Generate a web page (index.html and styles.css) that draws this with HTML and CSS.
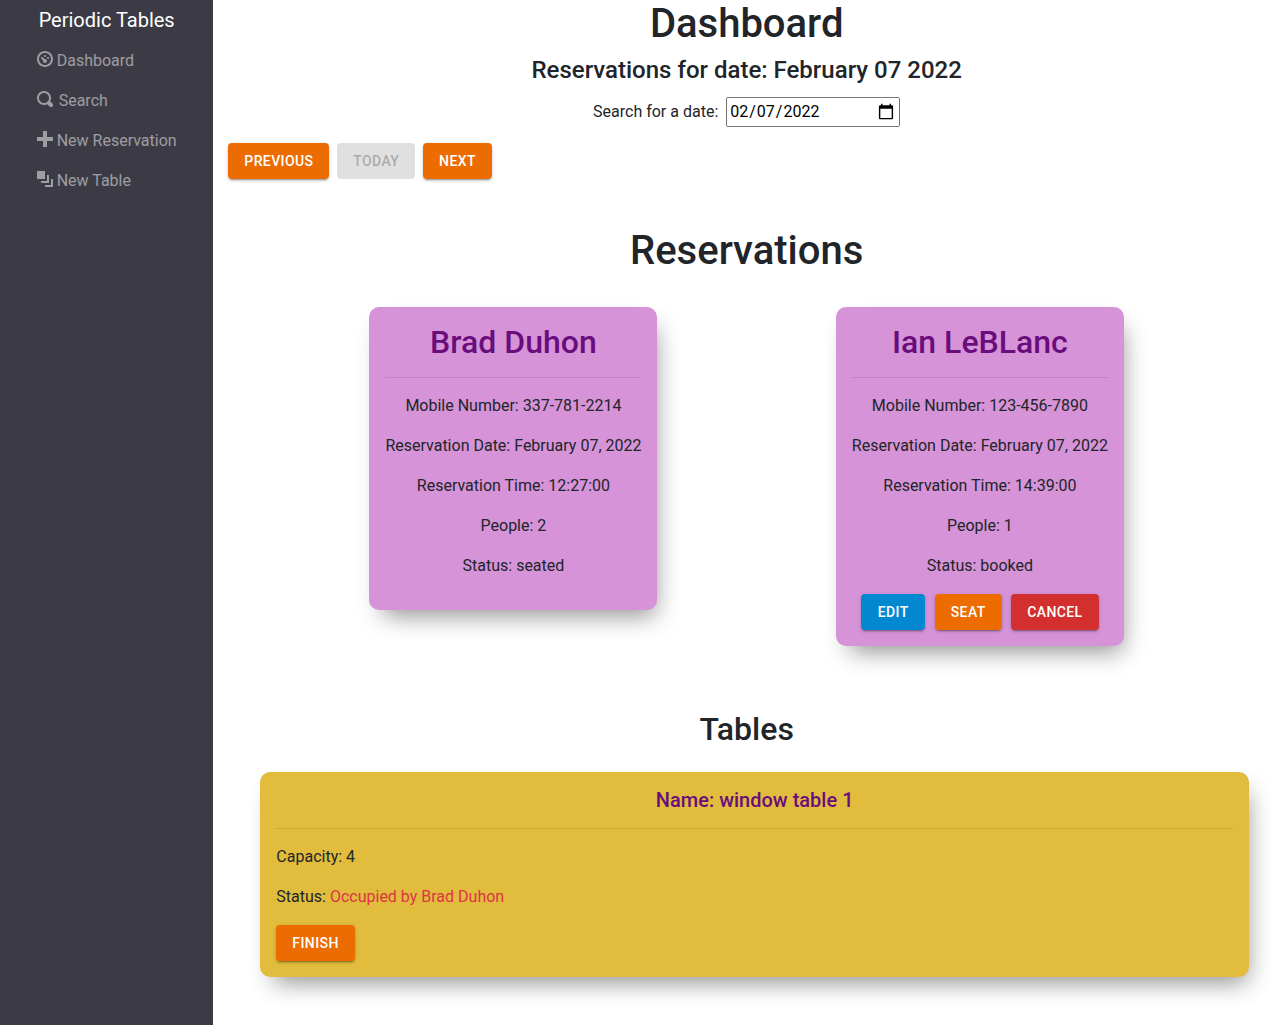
FILE: index.html
```html
<!DOCTYPE html>
<html lang="en">
<head>
<meta charset="utf-8">
<title>Periodic Tables</title>
<link rel="stylesheet" href="styles.css">
</head>
<body>
<div class="layout">
  <nav class="sidebar">
    <a class="brand">Periodic Tables</a>
    <ul class="menu">
      <li><svg class="icon" viewBox="0 0 8 8"><path d="M4 0c-2.2 0-4 1.8-4 4s1.8 4 4 4 4-1.8 4-4-1.8-4-4-4zm0 1c1.66 0 3 1.34 3 3s-1.34 3-3 3-3-1.34-3-3 1.34-3 3-3zm0 1c-.28 0-.5.22-.5.5s.22.5.5.5.5-.22.5-.5-.22-.5-.5-.5zm-1.66 1a.5.5 0 0 0-.19.84l.91.91c-.02.08-.06.16-.06.25 0 .55.45 1 1 1s1-.45 1-1-.45-1-1-1c-.09 0-.17.04-.25.06l-.91-.91a.5.5 0 0 0-.44-.16.5.5 0 0 0-.06 0zm3.16 0c-.28 0-.5.22-.5.5s.22.5.5.5.5-.22.5-.5-.22-.5-.5-.5z"/></svg>Dashboard</li>
      <li class="search"><svg class="icon" viewBox="0 0 8 8"><path d="M3.5 0c-1.93 0-3.5 1.57-3.5 3.5s1.57 3.5 3.5 3.5c.59 0 1.17-.14 1.66-.41a1 1 0 0 0 .13.13l1 1a1.02 1.02 0 1 0 1.44-1.44l-1-1a1 1 0 0 0-.16-.13c.27-.49.44-1.06.44-1.66 0-1.93-1.55-3.5-3.5-3.5zm0 1c1.39 0 2.5 1.1 2.5 2.5 0 .66-.24 1.27-.66 1.72-.01.01-.02.02-.03.03a1 1 0 0 0-.13.13c-.44.4-1.04.63-1.69.63-1.4 0-2.5-1.11-2.5-2.5s1.1-2.5 2.5-2.5z"/></svg>Search</li>
      <li><svg class="icon" viewBox="0 0 8 8"><path d="M3 0v3h-3v2h3v3h2v-3h3v-2h-3v-3h-2z"/></svg>New Reservation</li>
      <li><svg class="icon" viewBox="0 0 8 8"><path d="M0 0v4h4v-4h-4zm5 2v3h-3v1h4v-4h-1zm2 2v3h-3v1h4v-4h-1z"/></svg>New Table</li>
    </ul>
  </nav>
  <main class="main">
    <h1>Dashboard</h1>
    <h4>Reservations for date: February 07 2022</h4>
    <form class="date-form">
      <label for="date">Search for a date:</label>
      <input id="date" type="date" value="2022-02-07">
    </form>
    <div class="pager">
      <button class="btn">Previous</button>
      <button class="btn" disabled>Today</button>
      <button class="btn">Next</button>
    </div>
    <h1 class="section-title">Reservations</h1>
    <div class="reservations">
      <article class="card reservation">
        <h2>Brad Duhon</h2>
        <hr>
        <p>Mobile Number: 337-781-2214</p>
        <p>Reservation Date: February 07, 2022</p>
        <p>Reservation Time: 12:27:00</p>
        <p>People: 2</p>
        <p>Status: seated</p>
      </article>
      <article class="card reservation">
        <h2>Ian LeBLanc</h2>
        <hr>
        <p>Mobile Number: 123-456-7890</p>
        <p>Reservation Date: February 07, 2022</p>
        <p>Reservation Time: 14:39:00</p>
        <p>People: 1</p>
        <p>Status: booked</p>
        <div class="actions">
          <button class="btn btn-info">Edit</button>
          <button class="btn">Seat</button>
          <button class="btn btn-error">Cancel</button>
        </div>
      </article>
    </div>
    <h2 class="tables-title">Tables</h2>
    <article class="card table">
      <h5>Name: window table 1</h5>
      <hr>
      <p>Capacity: 4</p>
      <p>Status: <span class="occupied">Occupied by Brad Duhon</span></p>
      <button class="btn">Finish</button>
    </article>
  </main>
</div>
</body>
</html>
```
FILE: styles.css
```css
* { box-sizing: border-box; }

body {
  margin: 0;
  font: 400 16px/1.5 Roboto, sans-serif;
  color: #212529;
  background: #fff;
}

.layout { display: flex; min-height: 1025px; }

.sidebar {
  flex: 0 0 16.6667%;
  display: flex;
  flex-direction: column;
  align-items: center;
  padding-top: 5px;
  background: #3c3b45;
}

.brand { font-size: 20px; line-height: 30px; color: #fff; }

.menu {
  list-style: none;
  margin: 5px 0 0;
  padding: 0;
  color: rgba(255, 255, 255, .5);
}

.menu li { display: flex; gap: 4px; height: 40px; line-height: 42px; }
.menu .search { gap: 6px; }
.icon { width: 16px; height: 16px; margin-top: 11px; fill: currentColor; }

.main { flex: 1; min-width: 0; padding: 0 15px; }

h1, h2, h4, h5 { margin: 0 0 8px; font-weight: 500; line-height: 1.2; text-align: center; }
h1 { font-size: 40px; }
h2 { font-size: 32px; }
h4 { font-size: 24px; }
h5 { font-size: 20px; }
p { margin: 0 0 16px; }
hr { margin: 16px 0; border: 0; border-top: 1px solid rgba(0, 0, 0, .1); }

.date-form {
  display: flex;
  justify-content: center;
  gap: 8px;
  padding-top: 4px;
}
.date-form label { padding-top: 3px; }
.date-form input {
  width: 174px;
  height: 30px;
  font: inherit;
}
.date-form input::-webkit-calendar-picker-indicator { width: 18px; height: 18px; margin-right: 1px; }

.pager { display: flex; gap: 7.8px; margin-top: 16px; }

.btn {
  height: 36px;
  min-width: 64px;
  padding: 6px 16px;
  border: 0;
  border-radius: 4px;
  font: 500 14px/24.5px Roboto, sans-serif;
  letter-spacing: .4px;
  text-transform: uppercase;
  color: #fff;
  background: #ed6c02;
  box-shadow: 0 3px 1px -2px rgba(0, 0, 0, .2), 0 2px 2px rgba(0, 0, 0, .14), 0 1px 5px rgba(0, 0, 0, .12);
}
.btn:disabled { color: rgba(0, 0, 0, .26); background: #e0e0e0; box-shadow: none; }
.btn-info { background: #0288d1; }
.btn-error { background: #d32f2f; }

.section-title { margin: 48px 0 32px; }

.reservations {
  display: flex;
  justify-content: center;
  align-items: flex-start;
  gap: 178.4px;
}

.card {
  padding: 16px;
  border-radius: 10px;
  box-shadow: 6px 13px 24px -8px rgba(0, 0, 0, .45);
}
.card h2, .card h5 { color: #6a0d7c; }

.reservation { text-align: center; background: #d693d7; }
.actions { display: flex; justify-content: center; gap: 9.5px; }

.tables-title { margin: 64px 0 23px; }
.table { margin: 0 16px 0 32px; background: #e1bc3d; }
.occupied { color: #dc3545; }
```
